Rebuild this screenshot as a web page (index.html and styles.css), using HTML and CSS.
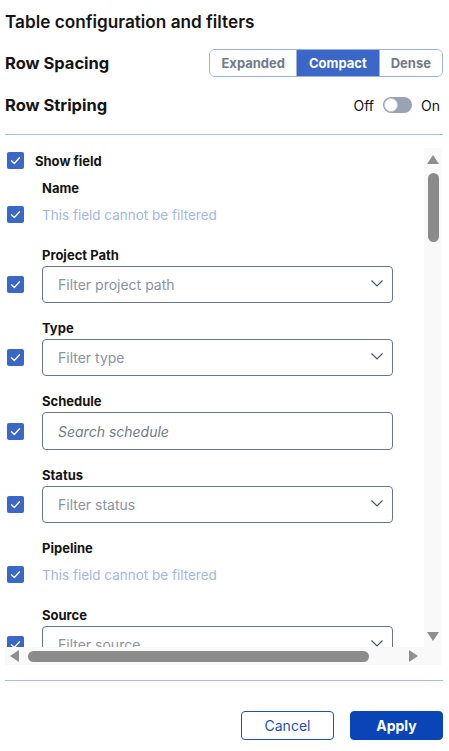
FILE: index.html
```html
<!DOCTYPE html>
<html lang="en">
<head>
<meta charset="utf-8">
<title>Table configuration and filters</title>
<link rel="stylesheet" href="styles.css">
</head>
<body>
<div class="panel">
  <h1 class="title">Table configuration and filters</h1>

  <div class="setting-row">
    <span class="setting-label">Row Spacing</span>
    <div class="segmented">
      <button class="seg">Expanded</button>
      <button class="seg seg-active">Compact</button>
      <button class="seg">Dense</button>
    </div>
  </div>

  <div class="setting-row setting-row-striping">
    <span class="setting-label">Row Striping</span>
    <div class="toggle-group">
      <span class="toggle-text">Off</span>
      <span class="toggle"><span class="toggle-knob"></span></span>
      <span class="toggle-text">On</span>
    </div>
  </div>

  <div class="divider"></div>

  <div class="scroll-frame">
    <div class="fields-viewport">
      <div class="fields">
        <div class="show-row">
          <span class="check"><svg viewBox="0 0 17 17"><polyline points="4.5,8.8 7.3,11.5 12.5,5.8"/></svg></span>
          <span class="show-label">Show field</span>
        </div>

        <div class="field">
          <div class="field-label">Name</div>
          <span class="check"><svg viewBox="0 0 17 17"><polyline points="4.5,8.8 7.3,11.5 12.5,5.8"/></svg></span>
          <div class="hint">This field cannot be filtered</div>
        </div>

        <div class="field">
          <div class="field-label">Project Path</div>
          <span class="check"><svg viewBox="0 0 17 17"><polyline points="4.5,8.8 7.3,11.5 12.5,5.8"/></svg></span>
          <div class="select"><span class="placeholder">Filter project path</span><svg class="chev" viewBox="0 0 12 7"><polyline points="0.5,0.5 6,6 11.5,0.5"/></svg></div>
        </div>

        <div class="field">
          <div class="field-label">Type</div>
          <span class="check"><svg viewBox="0 0 17 17"><polyline points="4.5,8.8 7.3,11.5 12.5,5.8"/></svg></span>
          <div class="select"><span class="placeholder">Filter type</span><svg class="chev" viewBox="0 0 12 7"><polyline points="0.5,0.5 6,6 11.5,0.5"/></svg></div>
        </div>

        <div class="field">
          <div class="field-label">Schedule</div>
          <span class="check"><svg viewBox="0 0 17 17"><polyline points="4.5,8.8 7.3,11.5 12.5,5.8"/></svg></span>
          <div class="search"><span class="placeholder placeholder-italic">Search schedule</span></div>
        </div>

        <div class="field">
          <div class="field-label">Status</div>
          <span class="check"><svg viewBox="0 0 17 17"><polyline points="4.5,8.8 7.3,11.5 12.5,5.8"/></svg></span>
          <div class="select"><span class="placeholder">Filter status</span><svg class="chev" viewBox="0 0 12 7"><polyline points="0.5,0.5 6,6 11.5,0.5"/></svg></div>
        </div>

        <div class="field">
          <div class="field-label">Pipeline</div>
          <span class="check"><svg viewBox="0 0 17 17"><polyline points="4.5,8.8 7.3,11.5 12.5,5.8"/></svg></span>
          <div class="hint">This field cannot be filtered</div>
        </div>

        <div class="field">
          <div class="field-label">Source</div>
          <span class="check"><svg viewBox="0 0 17 17"><polyline points="4.5,8.8 7.3,11.5 12.5,5.8"/></svg></span>
          <div class="select"><span class="placeholder">Filter source</span><svg class="chev" viewBox="0 0 12 7"><polyline points="0.5,0.5 6,6 11.5,0.5"/></svg></div>
        </div>
      </div>
    </div>

    <div class="vbar">
      <span class="arrow arrow-up"></span>
      <span class="vthumb"></span>
      <span class="arrow arrow-down"></span>
    </div>

    <div class="hbar">
      <span class="arrow arrow-left"></span>
      <span class="hthumb"></span>
      <span class="arrow arrow-right"></span>
    </div>

    <div class="corner"></div>
  </div>

  <div class="divider divider-bottom"></div>

  <div class="actions">
    <button class="btn btn-cancel">Cancel</button>
    <button class="btn btn-apply">Apply</button>
  </div>
</div>
</body>
</html>
```

FILE: styles.css
```css
* { box-sizing: border-box; }

html, body {
  margin: 0;
  padding: 0;
  background: #ffffff;
}

body {
  font-family: Inter, "Noto Sans", "Liberation Sans", sans-serif;
  color: #141414;
}

.panel {
  padding: 11px 6px 0 5px;
}

.title {
  margin: 0;
  font-size: 17.2px;
  line-height: 22px;
  font-weight: 600;
  color: #141414;
}

.setting-row {
  margin-top: 16px;
  height: 28px;
  display: flex;
  align-items: center;
  justify-content: space-between;
}

.setting-row-striping {
  margin-top: 14px;
}

.setting-label {
  font-size: 16.5px;
  font-weight: 700;
}

.segmented {
  display: flex;
  height: 28px;
  border: 1px solid #9cb2e6;
  border-radius: 6px;
  overflow: hidden;
}

.seg {
  border: 0;
  margin: 0;
  background: #ffffff;
  font-family: inherit;
  font-size: 13px;
  font-weight: 700;
  color: #727a8a;
  padding: 0 11px;
  height: 100%;
}

.seg + .seg {
  border-left: 1px solid #9cb2e6;
}

.seg-active {
  background: #3b67c7;
  color: #ffffff;
  padding: 0 12px;
}

.toggle-group {
  display: flex;
  align-items: center;
  gap: 9px;
  padding-right: 3px;
}

.toggle-text {
  font-size: 14px;
  color: #141414;
}

.toggle {
  width: 29px;
  height: 16px;
  border-radius: 8px;
  background: #9aa3b4;
  display: flex;
  align-items: center;
  padding: 0 1px;
}

.toggle-knob {
  width: 14px;
  height: 14px;
  border-radius: 50%;
  background: #ffffff;
  border: 1px solid #c4cad4;
}

.divider {
  margin-top: 15px;
  height: 1px;
  background: #a9bde9;
}

/* scroll area with drawn scrollbars */
.scroll-frame {
  margin-top: 13px;
  height: 517px;
  margin-right: 1px;
  display: grid;
  grid-template-columns: 1fr 18px;
  grid-template-rows: 1fr 18px;
}

.fields-viewport {
  overflow: hidden;
  min-height: 0;
}

.fields {
  width: 487px;
  padding: 3px 0 0 2px;
}

.vbar {
  background: #f9f9f9;
  display: flex;
  flex-direction: column;
  align-items: center;
  padding: 7px 0 6px;
}

.hbar {
  background: #f9f9f9;
  display: flex;
  align-items: center;
  padding: 0 6px 0 5px;
}

.corner {
  background: #f9f9f9;
}

.arrow {
  display: block;
  width: 0;
  height: 0;
}

.arrow-up {
  border-left: 6.5px solid transparent;
  border-right: 6.5px solid transparent;
  border-bottom: 9px solid #8e8e8e;
}

.arrow-down {
  margin-top: auto;
  border-left: 6.5px solid transparent;
  border-right: 6.5px solid transparent;
  border-top: 9px solid #8e8e8e;
}

.arrow-left {
  border-top: 6.5px solid transparent;
  border-bottom: 6.5px solid transparent;
  border-right: 9px solid #8e8e8e;
}

.arrow-right {
  margin-left: auto;
  border-top: 6.5px solid transparent;
  border-bottom: 6.5px solid transparent;
  border-left: 9px solid #8e8e8e;
}

.vthumb {
  display: block;
  margin-top: 9px;
  width: 11px;
  height: 69px;
  border-radius: 6px;
  background: #8b8b8b;
}

.hthumb {
  display: block;
  margin-left: 9px;
  width: 341px;
  height: 11px;
  border-radius: 6px;
  background: #8b8b8b;
}

.show-row {
  height: 19px;
  display: flex;
  align-items: center;
  gap: 11px;
}

.show-label {
  font-size: 13px;
  font-weight: 700;
}

.check {
  width: 17px;
  height: 17px;
  border-radius: 2px;
  background: #3b67c7;
  display: block;
}

.check svg {
  width: 17px;
  height: 17px;
  display: block;
  fill: none;
  stroke: #ffffff;
  stroke-width: 1.3;
  stroke-linecap: round;
  stroke-linejoin: round;
}

.field {
  display: grid;
  grid-template-columns: 35px 351px;
  grid-template-rows: 17px auto;
  row-gap: 2px;
  align-items: center;
  margin-top: 17px;
}

.show-row + .field {
  margin-top: 10px;
}

.field-label {
  grid-column: 2;
  grid-row: 1;
  font-size: 13px;
  font-weight: 700;
  line-height: 17px;
}

.field .check {
  grid-column: 1;
  grid-row: 2;
}

.hint {
  grid-column: 2;
  grid-row: 2;
  height: 31px;
  display: flex;
  align-items: center;
  font-size: 13.5px;
  color: #a3b7e7;
}

.select,
.search {
  grid-column: 2;
  grid-row: 2;
  display: flex;
  align-items: center;
  justify-content: space-between;
  height: 37px;
  border: 1px solid #6c768b;
  border-radius: 4px;
  padding: 0 9px 0 15px;
}

.search {
  height: 38px;
}

.placeholder {
  font-size: 14px;
  color: #8a93a4;
}

.placeholder-italic {
  font-style: italic;
  color: #707a8e;
}

.chev {
  width: 12px;
  height: 7px;
  fill: none;
  stroke: #4b556f;
  stroke-width: 1.2;
  margin-top: -2px;
}

.divider-bottom {
  margin-top: 15px;
}

.actions {
  margin-top: 30px;
  display: flex;
  justify-content: flex-end;
  gap: 16px;
}

.btn {
  height: 29px;
  width: 93px;
  border-radius: 4px;
  font-family: inherit;
  font-size: 14px;
  cursor: pointer;
}

.btn-cancel {
  background: #ffffff;
  border: 1px solid #1d4fc2;
  color: #1d4fc2;
}

.btn-apply {
  background: #0a45b7;
  border: 1px solid #0a45b7;
  color: #ffffff;
  font-weight: 700;
}
```
